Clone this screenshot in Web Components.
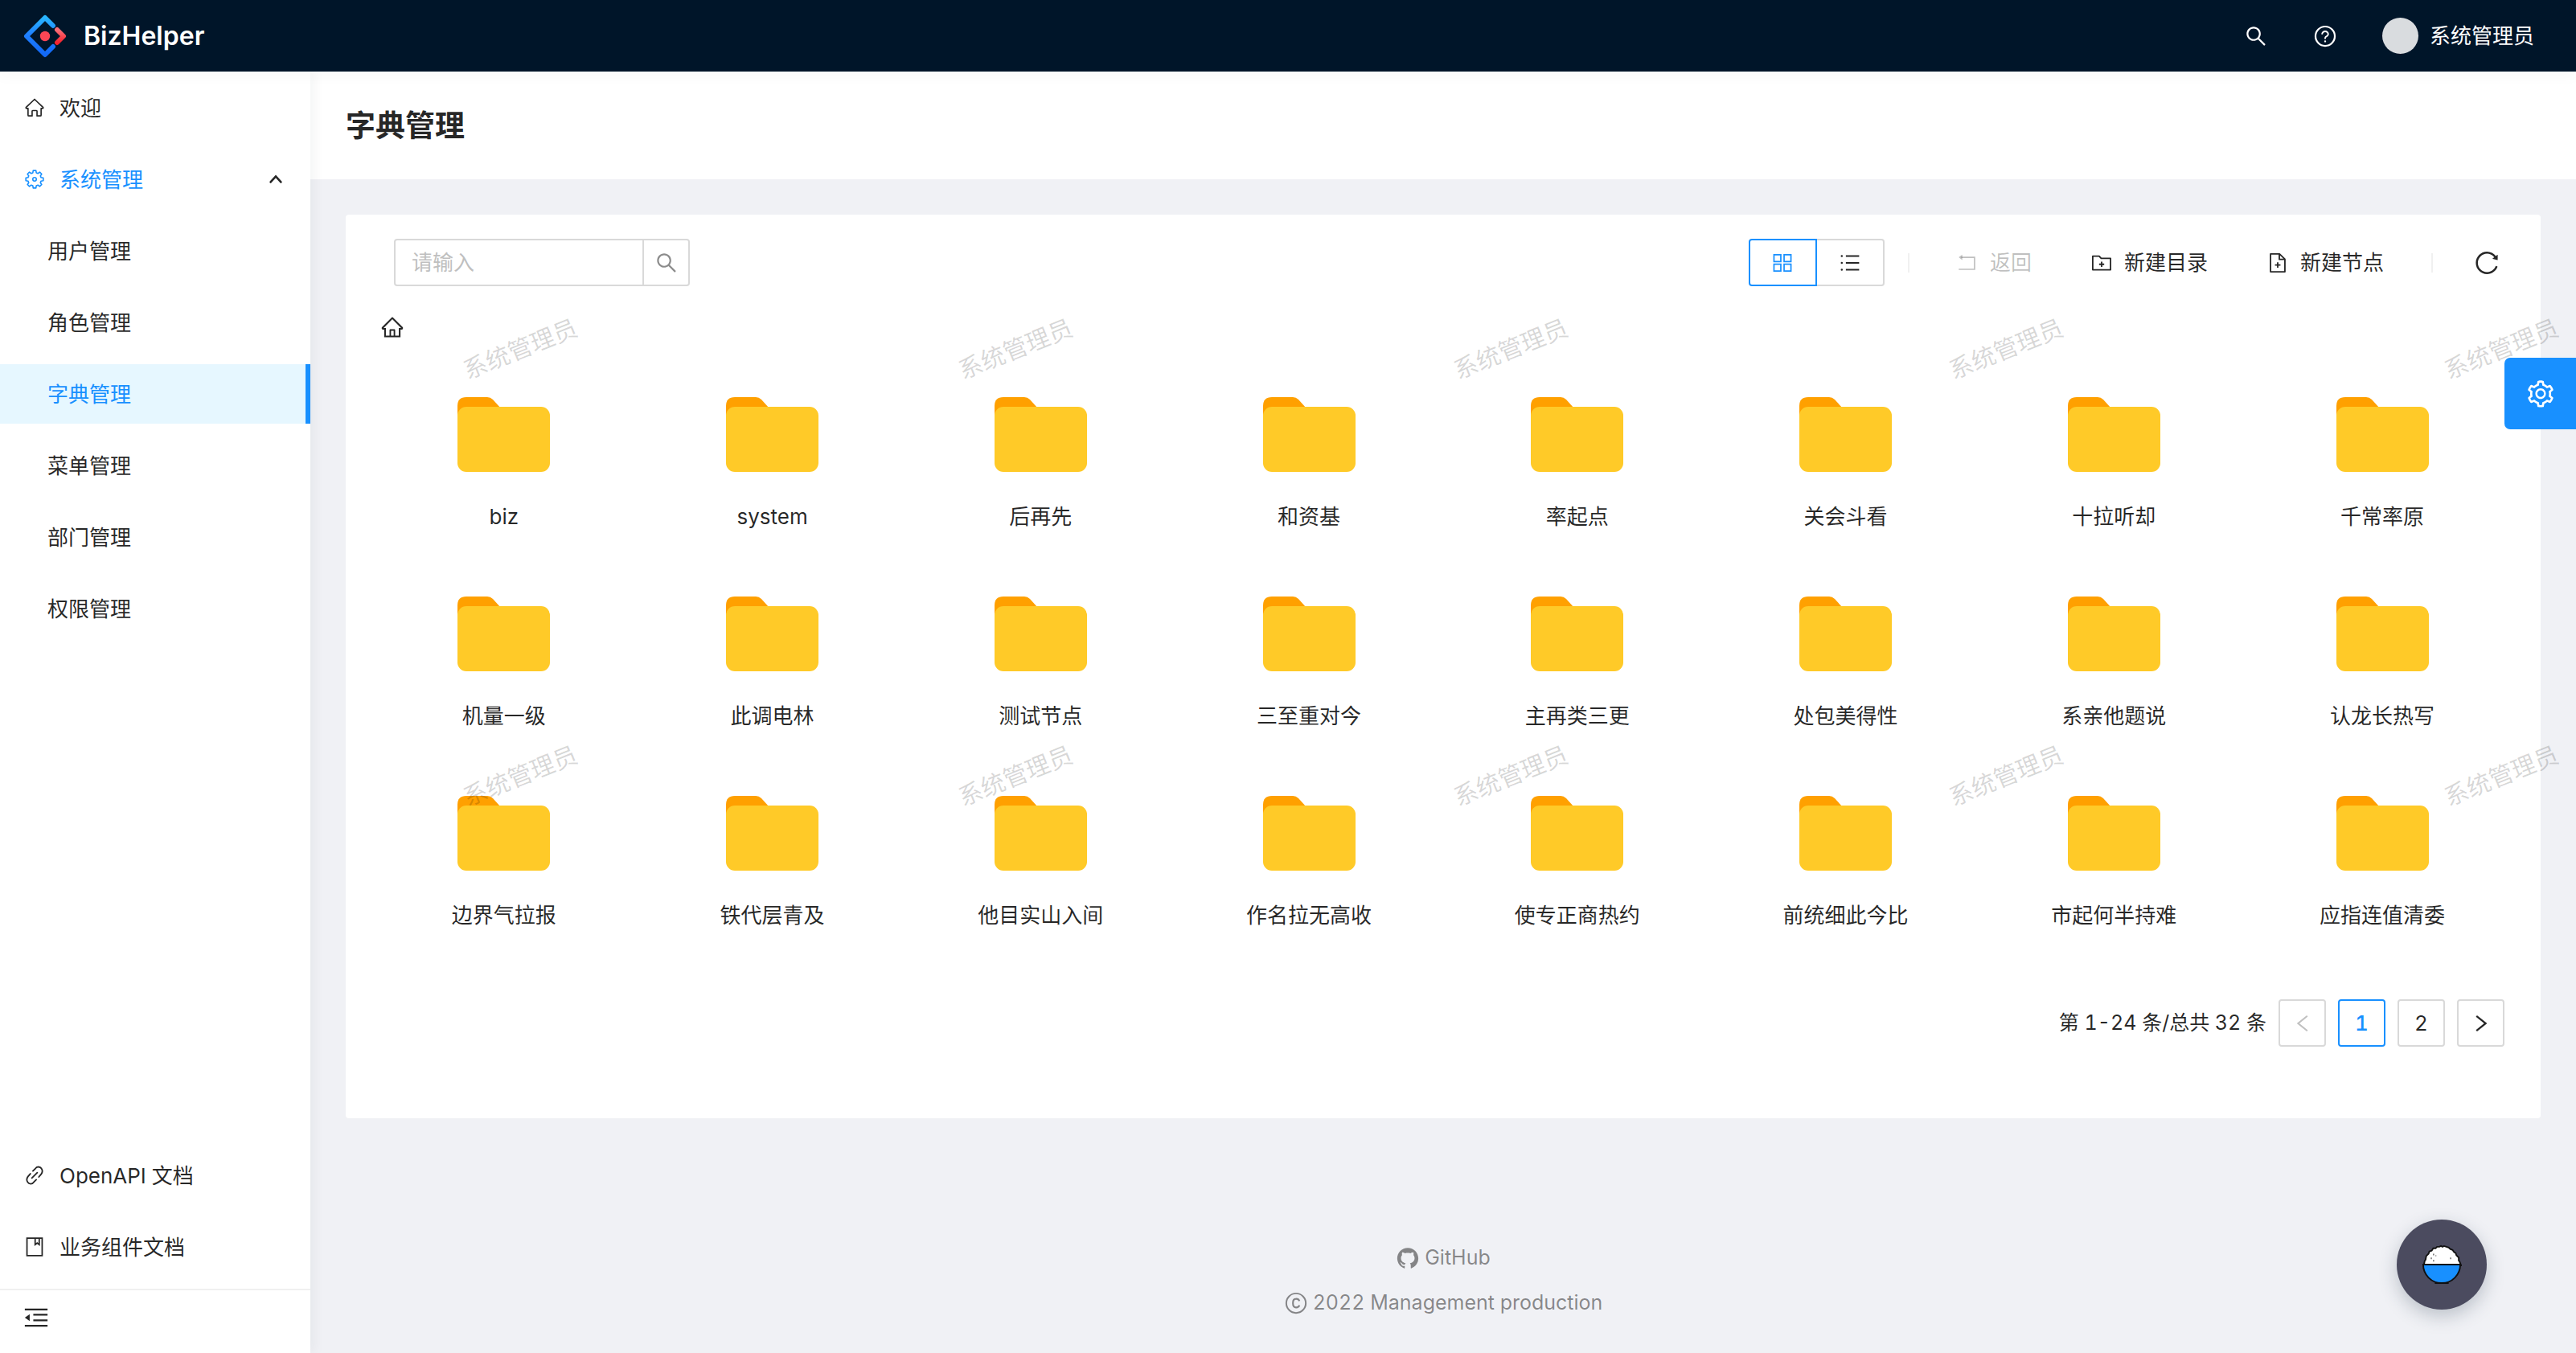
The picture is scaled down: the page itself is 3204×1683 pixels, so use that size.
<!DOCTYPE html>
<html lang="zh-CN">
<head>
<meta charset="utf-8">
<meta name="viewport" content="width=device-width, initial-scale=1">
<title>字典管理 - BizHelper</title>
<style>
  :root {
    --primary: #1890ff;
    --text: rgba(0, 0, 0, .85);
    --muted: rgba(0, 0, 0, .45);
    --disabled: rgba(0, 0, 0, .25);
    --border: #d9d9d9;
    --gap: 15px;
    --header: 89px;
  }
  html, body { margin: 0; }
  body {
    font: 26px/41px Inter, "Noto Sans CJK SC", sans-serif;
    font-feature-settings: "tnum";
    color: var(--text);
    background: #f0f1f5;
  }
</style>
</head>
<body>
<biz-app></biz-app>
<script>
const stroke = (body, w = 64) => `<g fill="none" stroke="currentColor" stroke-width="${w}">${body}</g>`;

/* Points of the cog outline used by the menu icon */
const cog = (() => {
  const pts = [];
  for (let i = 0; i < 8; i++) {
    for (const [d, r] of [[-15, 330], [-9, 432], [9, 432], [15, 330]]) {
      const a = (i * 45 + d) * Math.PI / 180;
      pts.push(`${Math.round(512 + r * Math.sin(a))},${Math.round(512 - r * Math.cos(a))}`);
    }
  }
  return pts.join(' ');
})();

const ICONS = {
  home: '<path d="M946.5 505L560.1 118.8l-25.9-25.9a31.5 31.5 0 00-44.4 0L77.5 505a63.9 63.9 0 00-18.8 46c.4 35.2 29.7 63.3 64.9 63.3h42.5V940h691.8V614.3h43.4c17.1 0 33.2-6.7 45.3-18.8a63.6 63.6 0 0018.7-45.3c0-17-6.7-33.1-18.8-45.2zM568 868H456V664h112v204zm217.9-325.7V868H632V640c0-22.1-17.9-40-40-40H432c-22.1 0-40 17.9-40 40v228H238.1V542.3h-96l370-369.7 23.1 23.1L882 542.3h-96.1z"/>',
  house: stroke('<path stroke-linejoin="round" d="M512 98L92 500q-10 40 30 44h70v330q0 40 40 40h160V680q0-30 30-30h180q30 0 30 30v234h160q40 0 40-40V544h70q40-4 30-44z"/>', 66),
  cog: stroke(`<polygon stroke-linejoin="round" points="${cog}"/><circle cx="512" cy="512" r="88"/>`, 62),
  link: stroke('<path stroke-linecap="round" d="M380 645L645 380M430 300L560 170a175 175 0 01290 10q90 130 -10 270L720 590M595 725L465 855a175 175 0 01-290-10q-90-130 10-270L305 435"/>', 72),
  book: stroke('<path d="M140 80H884V944H140zM540 80v320l100-76 100 76V80"/>', 70),
  fold: '<path d="M30 130h964v76H30zM390 352h604v76H390zM390 590h604v76H390zM30 818h964v76H30zM30 512L236 366v292z"/>',
  search: '<path d="M909.6 854.5L649.9 594.8C690.2 542.7 712 479 712 412c0-80.2-31.3-155.4-87.9-212.1-56.6-56.7-132-87.9-212.1-87.9s-155.5 31.3-212.1 87.9C143.2 256.5 112 331.8 112 412c0 80.1 31.3 155.5 87.9 212.1C256.5 680.8 331.8 712 412 712c67 0 130.6-21.8 182.7-62l259.7 259.6a8.2 8.2 0 0011.6 0l43.6-43.5a8.2 8.2 0 000-11.6zM570.4 570.4C528 612.7 471.8 636 412 636s-116-23.3-158.4-65.6C211.3 528 188 471.8 188 412s23.3-116.1 65.6-158.4C296 211.3 352.2 188 412 188s116.1 23.2 158.4 65.6S636 352.2 636 412s-23.3 116.1-65.6 158.4z"/>',
  help: stroke('<circle cx="512" cy="512" r="410"/>', 76) + '<path d="M623.6 316.7C593.6 290.4 554 276 512 276s-81.6 14.5-111.6 40.7C369.2 344 352 380.7 352 420v7.6c0 4.4 3.6 8 8 8h48c4.4 0 8-3.6 8-8V420c0-44.1 43.1-80 96-80s96 35.9 96 80c0 31.1-22 59.6-56.1 72.7-21.2 8.1-39.2 22.3-52.1 40.9-13.1 19-19.9 41.8-19.9 64.9V620c0 4.4 3.6 8 8 8h48c4.4 0 8-3.6 8-8v-22.7a48.3 48.3 0 0130.9-44.8c59-22.7 97.1-74.7 97.1-132.5.1-39.3-17.1-76-48.3-103.3zM472 732a40 40 0 1080 0 40 40 0 10-80 0z"/>',
  up: stroke('<path stroke-linecap="round" d="M150 710L512 310L874 710"/>', 150),
  left: stroke('<path d="M740 150L290 512L740 874"/>', 80),
  right: stroke('<path d="M284 150L734 512L284 874"/>', 90),
  grid: stroke('<path d="M96 116h336v336H96zM592 116h336v336H592zM96 572h336v336H96zM592 572h336v336H592z"/>', 68),
  list: '<path d="M310 140h650v80H310zM310 472h650v80H310zM310 804h650v80H310zM60 180a50 50 0 10100 0 50 50 0 10-100 0zM60 512a50 50 0 10100 0 50 50 0 10-100 0zM60 844a50 50 0 10100 0 50 50 0 10-100 0z"/>',
  back: stroke('<path d="M220 240H864V826H90"/>', 66) + '<path d="M90 240L262 110v260z"/>',
  folderAdd: stroke('<path stroke-linejoin="round" d="M76 180H390L490 290H948V850H76zM512 455v250M387 580h250"/>', 72),
  fileAdd: stroke('<path stroke-linejoin="round" d="M160 72H600L864 330V950H160zM590 80V340H856M512 480v270M377 615h270"/>', 72),
  reload: '<path d="M909.1 209.3l-56.4 44.1C775.8 155.1 656.2 92 521.9 92 290 92 102.3 279.5 102 511.5 101.7 743.7 289.8 932 521.9 932c181.3 0 335.8-115 394.6-276.1 1.5-4.2-.7-8.9-4.9-10.3l-56.7-19.5a8 8 0 00-10.1 4.8c-1.8 5-3.8 10-5.9 14.9-17.3 41-42.1 77.8-73.7 109.4A344.77 344.77 0 01655.9 829c-42.3 17.9-87.4 27-133.8 27-46.5 0-91.5-9.1-133.8-27A341.5 341.5 0 01279 755.2a342.16 342.16 0 01-73.7-109.4c-17.9-42.4-27-87.4-27-133.9s9.1-91.5 27-133.9c17.3-41 42.1-77.8 73.7-109.4 31.6-31.6 68.4-56.4 109.3-73.8 42.3-17.9 87.4-27 133.8-27 46.5 0 91.5 9.1 133.8 27a341.5 341.5 0 01109.3 73.8c9.9 9.9 19.2 20.4 27.8 31.4l-60.2 47a8 8 0 003 14.1l175.6 43c5 1.2 9.9-2.6 9.9-7.7l.8-180.9c-.1-6.6-7.8-10.3-13-6.2z"/>',
  setting: '<path d="M924.8 625.7l-65.5-56c3.1-19 4.7-38.4 4.7-57.8s-1.6-38.8-4.7-57.8l65.5-56a32.03 32.03 0 009.3-35.2l-.9-2.6a443.74 443.74 0 00-79.7-137.9l-1.8-2.1a32.12 32.12 0 00-35.1-9.5l-81.3 28.9c-30-24.6-63.5-44-99.7-57.6l-15.7-85a32.05 32.05 0 00-25.8-25.7l-2.7-.5c-52.1-9.4-106.9-9.4-159 0l-2.7.5a32.05 32.05 0 00-25.8 25.7l-15.8 85.4a351.86 351.86 0 00-99 57.4l-81.9-29.1a32 32 0 00-35.1 9.5l-1.8 2.1a446.02 446.02 0 00-79.7 137.9l-.9 2.6c-4.5 12.5-.8 26.5 9.3 35.2l66.3 56.6c-3.1 18.8-4.6 38-4.6 57.1 0 19.2 1.5 38.4 4.6 57.1L99 625.5a32.03 32.03 0 00-9.3 35.2l.9 2.6c18.1 50.4 44.9 96.9 79.7 137.9l1.8 2.1a32.12 32.12 0 0035.1 9.5l81.9-29.1c29.8 24.5 63.1 43.9 99 57.4l15.8 85.4a32.05 32.05 0 0025.8 25.7l2.7.5a449.4 449.4 0 00159 0l2.7-.5a32.05 32.05 0 0025.8-25.7l15.7-85a350 350 0 0099.7-57.6l81.3 28.9a32 32 0 0035.1-9.5l1.8-2.1c34.8-41.1 61.6-87.5 79.7-137.9l.9-2.6c4.5-12.3.8-26.3-9.3-35zM788.3 465.9c2.5 15.1 3.8 30.6 3.8 46.1s-1.3 31-3.8 46.1l-6.6 40.1 74.7 63.9a370.03 370.03 0 01-42.6 73.6L721 702.8l-31.4 25.8c-23.9 19.6-50.5 35-79.3 45.8l-38.1 14.3-17.9 97a377.5 377.5 0 01-85 0l-17.9-97.2-37.8-14.5c-28.5-10.8-55-26.2-78.7-45.7l-31.4-25.9-93.4 33.2c-17-22.9-31.2-47.6-42.6-73.6l75.5-64.5-6.5-40c-2.4-14.9-3.7-30.3-3.7-45.5 0-15.3 1.2-30.6 3.7-45.5l6.5-40-75.5-64.5c11.3-26.1 25.6-50.7 42.6-73.6l93.4 33.2 31.4-25.9c23.7-19.5 50.2-34.9 78.7-45.7l37.9-14.3 17.9-97.2c28.1-3.2 56.8-3.2 85 0l17.9 97 38.1 14.3c28.7 10.8 55.4 26.2 79.3 45.8l31.4 25.8 92.8-32.9c17 22.9 31.2 47.6 42.6 73.6L781.8 426l6.5 39.9zM512 326c-97.2 0-176 78.8-176 176s78.8 176 176 176 176-78.8 176-176-78.8-176-176-176zm79.2 255.2A111.6 111.6 0 01512 614c-29.9 0-58-11.7-79.2-32.8A111.6 111.6 0 01400 502c0-29.9 11.7-58 32.8-79.2C454 401.6 482.1 390 512 390c29.9 0 58 11.6 79.2 32.8A111.6 111.6 0 01624 502c0 29.9-11.7 58-32.8 79.2z"/>',
  github: '<path d="M511.6 76.3C264.3 76.2 64 276.4 64 523.5 64 718.9 189.3 885 363.8 946c23.5 5.9 19.9-10.8 19.9-22.2v-77.5c-135.7 15.9-141.2-73.9-150.3-88.9C215 726 171.5 718 184.5 703c30.9-15.9 62.4 4 98.9 57.9 26.4 39.1 77.9 32.5 104 26 5.7-23.5 17.9-44.5 34.7-60.8-140.6-25.2-199.2-111-199.2-213 0-49.5 16.3-95 48.3-131.7-20.4-60.5 1.9-112.3 4.9-120 58.1-5.2 118.5 41.6 123.2 45.3 33-8.9 70.7-13.6 112.9-13.6 42.4 0 80.2 4.9 113.5 13.9 11.3-8.6 67.3-48.8 121.3-43.9 2.9 7.7 24.7 58.3 5.5 118 32.4 36.8 48.9 82.7 48.9 132.3 0 102.2-59 188.1-200 212.9a127.5 127.5 0 0138.1 91v112.5c.8 9 0 17.9 15 17.9 177.1-59.7 304.6-227 304.6-424.1 0-247.2-200.4-447.3-447.5-447.3z"/>',
  copyright: stroke('<circle cx="512" cy="512" r="414"/>', 68) + stroke('<path d="M656 425A144 150 0 00512 330C420 330 380 400 380 512S420 694 512 694A144 150 0 00656 600"/>', 72)
};

function define(name, css, html) {
  customElements.define(name, class extends HTMLElement {
    constructor() {
      super();
      const t = document.createElement('template');
      t.innerHTML = `<style>*{box-sizing:border-box}button,input{font:inherit;color:inherit;margin:0}a{color:inherit;text-decoration:none}${css}</style>${typeof html === 'string' ? html : html(this)}`;
      this.attachShadow({ mode: 'open' }).append(t.content.cloneNode(true));
    }
  });
}

define('biz-icon', `
  :host { display: inline-flex; flex: none; width: 26px; height: 26px; }
  :host([size="s"]) { width: 18px; height: 18px; }
  :host([size="m"]) { width: 30px; height: 30px; }
  :host([size="l"]) { width: 34px; height: 34px; }
  :host([size="xl"]) { width: 38px; height: 38px; }
  svg { width: 100%; height: 100%; display: block; }
`, el => `<svg viewBox="0 0 1024 1024" fill="currentColor" aria-hidden="true">${ICONS[el.getAttribute('name')]}</svg>`);

define('biz-logo', `
  :host { display: flex; align-items: center; gap: 21px; color: #fff; font-weight: 600; font-size: 32px; }
  svg { width: 54px; height: 54px; display: block; }
`, `<svg viewBox="0 0 54 54" fill="none" stroke-width="6" stroke-linecap="round" stroke-linejoin="round" aria-hidden="true">
    <defs>
      <linearGradient id="b" x1="0" y1="0" x2="0" y2="1"><stop stop-color="#29b6ff"/><stop offset=".45" stop-color="#1f80ff"/><stop offset="1" stop-color="#1268f5"/></linearGradient>
      <linearGradient id="r" x1="0" y1="0" x2="0" y2="1"><stop stop-color="#fa6e78"/><stop offset="1" stop-color="#f5222d"/></linearGradient>
    </defs>
    <path stroke="url(#b)" d="M37 14L27 4L4 27L27 50L37 40"/>
    <path stroke="url(#r)" d="M42 19L50 27L42 35"/>
    <circle cx="27" cy="27" r="6.200" fill="#fb4655"/>
  </svg><slot></slot>`);

define('biz-header', `
  :host { display: block; position: relative; z-index: 3; }
  header { height: var(--header); display: flex; align-items: center; justify-content: space-between; padding: 0 52px 0 29px; background: #001529; color: #fff; }
  nav { display: flex; align-items: center; }
  button { border: 0; background: none; padding: 0; display: flex; align-items: center; gap: 14px; }
  nav button.i { width: 86px; justify-content: center; }
  .user { padding-left: 28px; }
  .avatar { width: 45px; height: 45px; border-radius: 50%; background: #d9dcdf; }
`, `<header><biz-logo>BizHelper</biz-logo><nav>
    <button class="i" aria-label="搜索"><biz-icon name="search" size="m"></biz-icon></button>
    <button class="i" aria-label="帮助"><biz-icon name="help" size="m"></biz-icon></button>
    <button class="user"><span class="avatar"></span><span>系统管理员</span></button>
  </nav></header>`);

define('biz-menu-item', `
  :host { display: block; }
  a { height: 74px; padding: 0 34px 0 30px; display: flex; align-items: center; gap: 18px; border-right: 0 solid var(--primary); }
  span { flex: 1; }
  :host([sub]) a { padding-left: 59px; }
  :host([open]) a { color: var(--primary); }
  :host([open]) biz-icon[name=up] { color: var(--text); }
  :host([selected]) a { color: var(--primary); background: #e6f7ff; border-right-width: 6px; }
`, el => {
  const icon = el.getAttribute('icon');
  return `<a href="#">${icon ? `<biz-icon name="${icon}"></biz-icon>` : ''}<span><slot></slot></span>${el.hasAttribute('open') ? '<biz-icon name="up" size="s"></biz-icon>' : ''}</a>`;
});

define('biz-sider', `
  :host { display: flex; flex-direction: column; width: 386px; flex: none; background: #fff; box-shadow: 4px 0 15px rgba(29, 35, 41, .05); position: relative; z-index: 1; }
  nav { display: flex; flex-direction: column; gap: var(--gap); padding-top: 8px; }
  nav.main { flex: 1; }
  nav.links { padding-bottom: var(--gap); }
  .trigger { height: 80px; border: 0; border-top: 2px solid #f0f0f0; background: none; padding: 0 30px 10px; display: flex; align-items: center; }
`, `<nav class="main">
    <biz-menu-item icon="house">欢迎</biz-menu-item>
    <biz-menu-item icon="cog" open>系统管理</biz-menu-item>
    <biz-menu-item sub>用户管理</biz-menu-item>
    <biz-menu-item sub>角色管理</biz-menu-item>
    <biz-menu-item sub selected>字典管理</biz-menu-item>
    <biz-menu-item sub>菜单管理</biz-menu-item>
    <biz-menu-item sub>部门管理</biz-menu-item>
    <biz-menu-item sub>权限管理</biz-menu-item>
  </nav>
  <nav class="links">
    <biz-menu-item icon="link">OpenAPI 文档</biz-menu-item>
    <biz-menu-item icon="book">业务组件文档</biz-menu-item>
  </nav>
  <button class="trigger" aria-label="收起菜单"><biz-icon name="fold" size="m"></biz-icon></button>`);

define('biz-search', `
  :host { display: block; width: 368px; }
  form { display: flex; height: 59px; border: 2px solid var(--border); border-radius: 4px; }
  input { flex: 1; min-width: 0; border: 0; padding: 0 20px; background: none; outline: 0; }
  input::placeholder { color: #bfbfbf; opacity: 1; }
  button { width: 57px; border: 0; border-left: 2px solid var(--border); background: none; padding: 0; display: flex; align-items: center; justify-content: center; color: var(--muted); }
`, `<form onsubmit="return false"><input type="text" aria-label="关键字" placeholder="请输入"><button aria-label="搜索"><biz-icon name="search" size="m"></biz-icon></button></form>`);

define('biz-view-switch', `
  :host { display: flex; }
  label { width: 84px; height: 59px; display: flex; align-items: center; justify-content: center; border: 2px solid var(--border); border-left: 0; border-radius: 0 4px 4px 0; }
  label.on { width: 85px; border: 2px solid var(--primary); border-radius: 4px 0 0 4px; color: var(--primary); }
  input { appearance: none; width: 0; height: 0; margin: 0; }
`, `<label class="on"><input type="radio" name="view" aria-label="网格" checked><biz-icon name="grid"></biz-icon></label>
  <label><input type="radio" name="view" aria-label="列表"><biz-icon name="list"></biz-icon></label>`);

define('biz-action', `
  :host { display: block; }
  button { border: 0; background: none; padding: 0; height: 59px; display: flex; align-items: center; gap: var(--gap); }
  button:disabled { color: var(--disabled); }
`, el => `<button ${el.hasAttribute('disabled') ? 'disabled' : ''}><biz-icon name="${el.getAttribute('icon')}"></biz-icon><slot></slot></button>`);

define('biz-toolbar', `
  :host { display: flex; justify-content: space-between; align-items: center; padding: 0 15px 0 30px; }
  .right { display: flex; align-items: center; }
  .actions { display: flex; gap: 74px; padding: 0 59px; }
  i { width: 2px; height: 24px; background: #f0f0f0; }
  i.first { margin-left: 29px; }
  .reload { margin-left: 44px; width: 45px; height: 45px; border: 0; background: none; padding: 0; display: flex; align-items: center; justify-content: center; }
`, `<biz-search></biz-search>
  <div class="right">
    <biz-view-switch></biz-view-switch><i class="first"></i>
    <div class="actions">
      <biz-action icon="back" disabled>返回</biz-action>
      <biz-action icon="folderAdd">新建目录</biz-action>
      <biz-action icon="fileAdd">新建节点</biz-action>
    </div><i></i>
    <button class="reload" aria-label="刷新"><biz-icon name="reload" size="l"></biz-icon></button>
  </div>`);

define('biz-folder', `
  :host { display: block; }
  a { display: flex; flex-direction: column; align-items: center; gap: 35px; }
  svg { width: 115px; height: 93px; display: block; }
`, `<a href="#"><svg viewBox="0 0 115 93" aria-hidden="true">
    <path fill="#ffa000" d="M11 0H37Q41 0 44 3L54 14V40H0V11Q0 0 11 0z"/>
    <rect y="12" width="115" height="81" rx="11" fill="#ffca28"/>
  </svg><span><slot></slot></span></a>`);

define('biz-folders', `
  :host { display: grid; grid-template-columns: repeat(8, 1fr); row-gap: 79px; }
`, ['biz','system','后再先','和资基','率起点','关会斗看','十拉听却','千常率原',
    '机量一级','此调电林','测试节点','三至重对今','主再类三更','处包美得性','系亲他题说','认龙长热写',
    '边界气拉报','铁代层青及','他目实山入间','作名拉无高收','使专正商热约','前统细此今比','市起何半持难','应指连值清委']
    .map(n => `<biz-folder>${n}</biz-folder>`).join(''));

define('biz-pagination', `
  :host { display: flex; justify-content: flex-end; align-items: center; gap: var(--gap); padding-right: 15px; }
  span { font-size: 25px; }
  button { width: 59px; height: 59px; border: 2px solid var(--border); border-radius: 4px; background: #fff; padding: 0; display: flex; align-items: center; justify-content: center; }
  button:disabled { color: var(--disabled); }
  button[aria-current] { color: var(--primary); border-color: var(--primary); font-weight: 500; }
`, `<span>第 1-24 条/总共 32 条</span>
  <button disabled aria-label="上一页"><biz-icon name="left"></biz-icon></button>
  <button aria-current="page">1</button><button>2</button>
  <button aria-label="下一页"><biz-icon name="right"></biz-icon></button>`);

define('biz-watermark', `
  :host { position: absolute; inset: 0; overflow: hidden; pointer-events: none; display: grid; grid-template-columns: repeat(5, 616px); grid-template-rows: repeat(2, 531px); z-index: 2; }
  div { padding: 191px 0 0 186px; }
  span { display: inline-block; font-size: 30px; color: rgba(0, 0, 0, .16); transform: rotate(-22deg); }
`, '<div><span>系统管理员</span></div>'.repeat(10));

define('biz-content', `
  :host { display: block; position: relative; }
  section { padding: 44px; }
  .card { background: #fff; border-radius: 4px; padding: 30px 30px 89px; }
  .crumb { padding: 30px 13px 0; display: flex; height: 71px; align-items: center; }
  .crumb a { display: flex; }
  biz-folders { margin-top: 67px; }
  biz-pagination { margin-top: 84px; }
`, `<section><div class="card">
    <biz-toolbar></biz-toolbar>
    <nav class="crumb"><a href="#" aria-label="根目录"><biz-icon name="home" size="m"></biz-icon></a></nav>
    <biz-folders></biz-folders>
    <biz-pagination></biz-pagination>
  </div></section><biz-watermark></biz-watermark>`);

define('biz-footer', `
  :host { display: flex; flex-direction: column; align-items: center; gap: var(--gap); padding: 109px 0 41px; color: var(--muted); font-size: 25px; }
  a, div { display: flex; align-items: center; gap: 6px; }
`, `<a href="#"><biz-icon name="github" size="m"></biz-icon>GitHub</a>
  <div><biz-icon name="copyright" size="m"></biz-icon>2022 Management production</div>`);

define('biz-float', `
  button { position: fixed; padding: 0; border: 0; display: flex; align-items: center; justify-content: center; z-index: 5; }
  .setting { right: 0; top: 445px; width: 89px; height: 89px; border-radius: 7px 0 0 7px; background: var(--primary); color: #fff; }
  .theme { right: 111px; bottom: 54px; width: 112px; height: 112px; border-radius: 50%; background: #4b4b5f; box-shadow: 0 8px 22px rgba(30, 50, 70, .25); }
  svg { width: 50px; height: 50px; }
`, `<button class="setting" aria-label="主题设置"><biz-icon name="setting" size="xl"></biz-icon></button>
  <button class="theme" aria-label="饭碗"><svg viewBox="0 0 52 52" aria-hidden="true">
    <path fill="#111" d="M17 48h18v3H17z"/>
    <path fill="#fff" stroke="#111" stroke-width="2" d="M3 26l1-5 1-1 1-5 3-3 1-3 3-1 2-3 3 0 2-2 3 0 2-1 2 1 2-1 3 1 3 1 2 2 3 1 2 3 2 1 1 3 3 3 0 4 1 1 2 5z"/>
    <path fill="#1890ff" stroke="#111" stroke-width="2" d="M2 26h48A24 24 0 0 1 2 26z"/>
    <path fill="#222" d="M15 12h1v2h-1zM18 14h1v1h-1zM12 17h1v2h-1zM15 20h1v2h-1zM37 17h1v2h-1z"/>
  </svg></button>`);

define('biz-app', `
  :host { display: flex; flex-direction: column; min-height: 100vh; }
  .body { flex: 1; display: flex; }
  main { flex: 1; min-width: 0; }
  h1 { margin: 0; padding: 38px 44px 37px; background: #fff; font-size: 37px; line-height: 59px; font-weight: 600; }
  .shade { height: 0; box-shadow: 0 2px 15px 2px rgba(0, 21, 41, .08); position: relative; z-index: 2; }
`, `<biz-header></biz-header><div class="shade"></div>
  <div class="body"><biz-sider></biz-sider>
    <main><h1>字典管理</h1><biz-content></biz-content><biz-footer></biz-footer></main>
  </div><biz-float></biz-float>`);
</script>
</body>
</html>
